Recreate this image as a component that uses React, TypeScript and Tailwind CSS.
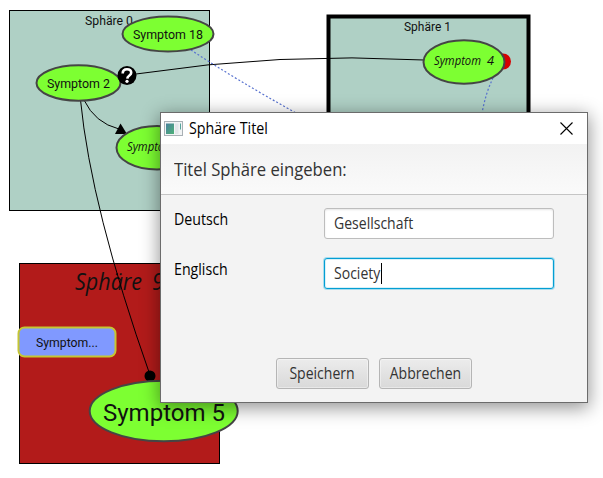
import type { ReactNode } from 'react';

type NodeProps = {
  cx: number;
  cy: number;
  rx: number;
  ry: number;
};

function Symptom({ cx, cy, rx, ry }: NodeProps) {
  return <ellipse cx={cx} cy={cy} rx={rx} ry={ry} fill="#7dff32" stroke="#454545" strokeWidth={2} />;
}

type LabelProps = {
  x: number;
  y: number;
  width: number;
  size: number;
  hand?: boolean;
  children: ReactNode;
};

function Label({ x, y, width, size, hand, children }: LabelProps) {
  return (
    <text
      x={x}
      y={y}
      fontSize={size}
      textLength={width}
      lengthAdjust="spacingAndGlyphs"
      fill="#111"
      className={hand ? "font-['Open_Sans',sans-serif] italic" : 'font-[Roboto,sans-serif]'}
    >
      {children}
    </text>
  );
}

function Diagram() {
  return (
    <svg width="603" height="478" viewBox="0 0 603 478" className="block">
      <rect x="9.5" y="10.5" width="200" height="200" fill="#afd0c5" stroke="#000" />
      <rect x="328.5" y="16.5" width="200" height="200" fill="#afd0c5" stroke="#000" strokeWidth="4" />
      <rect x="19.5" y="263.5" width="200" height="200" fill="#b21b1a" stroke="#000" />
      <Label x={85} y={25} width={48} size={12}>Sphäre 0</Label>
      <Label x={404} y={31} width={47} size={12}>Sphäre 1</Label>
      <Label x={75} y={290} width={67} size={23.5} hand>Sphäre</Label>
      <Label x={152} y={290} width={12} size={23.5} hand>9</Label>

      <g fill="none" stroke="#000">
        <path d="M136 74Q280 52 424 60" />
        <path d="M84 100Q95 123 119 129" />
        <path d="M80.500 100Q91 208 150 375" />
        <g stroke="#5872cf" strokeWidth="1.200" strokeDasharray="2 2">
          <path d="M191 50Q235 79 296 113" />
          <path d="M493 78Q486 92 482 113" />
        </g>
      </g>

      <path d="M120.500 123.500L115 134H127Z" />
      <circle cx="150" cy="376" r="5.500" />
      <circle cx="503" cy="61.500" r="8" fill="#d50000" />

      <Symptom cx={168} cy={34} rx={45.5} ry={17.5} />
      <Symptom cx={78.5} cy={83} rx={42} ry={17.7} />
      <Symptom cx={157} cy={147.8} rx={40.5} ry={21.7} />
      <Symptom cx={464} cy={62} rx={40.5} ry={21.7} />
      <Symptom cx={163.7} cy={411} rx={74} ry={30.3} />

      <circle cx="127" cy="75.500" r="9.500" />
      <path
        d="M122.700 73.500C122.700 70.700 124.300 69.300 127 69.300S131.200 70.700 131.200 72.800C131.200 75.600 127.400 75.300 127.300 78.600"
        fill="none"
        stroke="#fff"
        strokeWidth="2.600"
      />
      <circle cx="127" cy="81.300" r="1.600" fill="#fff" />

      <rect x="18.500" y="327.500" width="97" height="29" rx="6" fill="#8099ff" stroke="#c5c633" strokeWidth="2" />
      <Label x={133} y={39} width={70} size={12.5}>Symptom 18</Label>
      <Label x={47} y={88} width={63} size={12.5}>Symptom 2</Label>
      <Label x={36} y={347} width={62} size={12.5}>Symptom...</Label>
      <Label x={103} y={421} width={122} size={24}>Symptom 5</Label>
      <Label x={434} y={64.5} width={47} size={12.5} hand>Symptom</Label>
      <Label x={487} y={64.5} width={7} size={12.5} hand>4</Label>
      <Label x={127} y={150.5} width={47} size={12.5} hand>Symptom</Label>
    </svg>
  );
}

function AppIcon() {
  return (
    <svg width="19" height="15" viewBox="0 0 19 15" className="shrink-0">
      <defs>
        <linearGradient id="icon-screen" x1="0" y1="0" x2="1" y2="1">
          <stop offset="0" stopColor="#48819c" />
          <stop offset="1" stopColor="#4eb178" />
        </linearGradient>
      </defs>
      <rect x=".5" y=".5" width="18" height="14" fill="#f2f4f5" stroke="#a9b0b5" />
      <rect x="2" y="2.500" width="8" height="10.500" fill="url(#icon-screen)" />
      <rect x="11" y="2.500" width="3.500" height="10.500" fill="#e2e6e9" />
      <rect x="16" y="2.500" width="1" height="6" fill="#55a399" />
    </svg>
  );
}

function Dialog() {
  return (
    <div className="absolute left-[160px] top-[112px] flex h-[291px] w-[428px] flex-col border border-[#6b6b6b] bg-[#f3f3f3] font-['Open_Sans',sans-serif] text-[15.5px] text-[#333] shadow-[0_4px_17px_1px_rgba(0,0,0,0.42)]">
      <div className="flex h-[31px] shrink-0 items-center bg-white pl-[3px] pr-[14px] text-black">
        <AppIcon />
        <span className="ml-[6px] inline-block origin-left scale-x-[0.92] whitespace-nowrap">Sphäre Titel</span>
        <svg width="13" height="13" viewBox="0 0 13 13" className="ml-auto">
          <path d="M.5.5l12 12M12.500.5l-12 12" stroke="#000" strokeWidth="1.100" />
        </svg>
      </div>
      <div className="flex h-[51px] shrink-0 items-center border-b border-[#c5c5c5] bg-linear-to-b from-[#f2f2f2] to-[#fafafa] pl-[13px]">
        <span className="inline-block origin-left scale-x-[0.925] whitespace-nowrap text-[18px]">Titel Sphäre eingeben:</span>
      </div>
      <div className="grid grid-cols-[150px_230px] gap-y-[19px] pl-[13px] pt-[13px] leading-[23px]">
        <span className="origin-left scale-x-[0.915] text-black">Deutsch</span>
        <div className="flex h-[31px] items-center rounded-[3px] border border-[#bdbdbd] bg-white px-[9px] shadow-[inset_0_1px_2px_#e5e5e5]">
          <span className="inline-block origin-left scale-x-[0.905]">Gesellschaft</span>
        </div>
        <span className="origin-left scale-x-[0.915] text-black">Englisch</span>
        <div className="flex h-[31px] items-center rounded-[3px] border border-[#039ed3] bg-white px-[9px] shadow-[0_0_0_1px_#a9dced,inset_0_0_0_1px_#d9f1f8]">
          <span className="inline-block w-[47px] origin-left scale-x-[0.905]">Society</span>
          <span className="h-[21px] w-px bg-black" />
        </div>
      </div>
      <div className="mb-[13px] mt-auto flex gap-[10px] pl-[115px]">
        <button className="flex h-[31px] w-[93px] items-center justify-center rounded-[3px] border border-[#b5b5b5] bg-linear-to-b from-[#ececec] to-[#d9d9d9] shadow-[inset_0_0_0_1px_#ffffff66]">
          <span className="inline-block scale-x-[0.905]">Speichern</span>
        </button>
        <button className="flex h-[31px] w-[93px] items-center justify-center rounded-[3px] border border-[#b5b5b5] bg-linear-to-b from-[#ececec] to-[#d9d9d9] shadow-[inset_0_0_0_1px_#ffffff66]">
          <span className="inline-block scale-x-[0.905]">Abbrechen</span>
        </button>
      </div>
    </div>
  );
}

export default function App() {
  return (
    <main className="relative h-[478px] w-[603px] overflow-hidden bg-white">
      <Diagram />
      <Dialog />
    </main>
  );
}
